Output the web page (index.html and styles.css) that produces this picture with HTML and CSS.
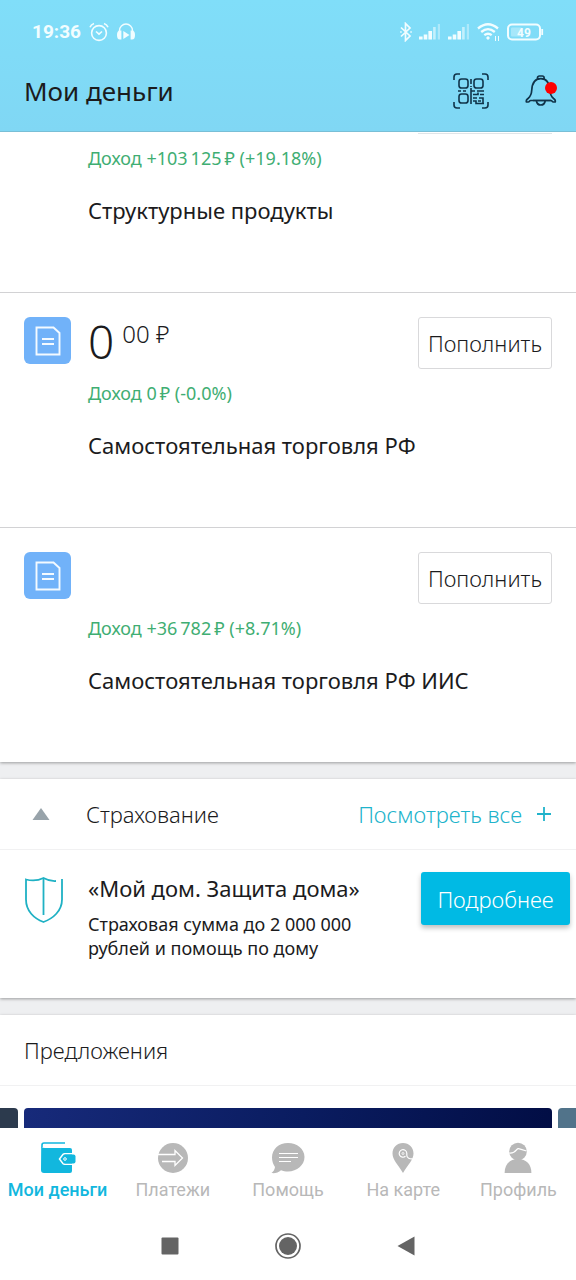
FILE: index.html
```html
<!DOCTYPE html>
<html lang="ru">
<head>
<meta charset="utf-8">
<meta name="viewport" content="width=device-width, initial-scale=1">
<title>Мои деньги</title>
<link rel="stylesheet" href="styles.css">
</head>
<body>
<div class="app">
  <header class="header">
    <div class="status">
      <div class="status-group">
        <span class="clock">19:36</span>
        <svg width="20" height="20" viewBox="0 0 20 20" fill="none" stroke="currentColor" stroke-width="1.6"><circle cx="10" cy="11" r="7.4"/><path d="M7 9.5l3 2.6 3-2.6M1 5.2Q2 2.4 5 1.4M19 5.2Q18 2.4 15 1.4"/></svg>
        <svg width="18" height="18" viewBox="0 0 18 18"><path d="M2.5 9V7.500a6.500 6.500 0 0 1 13 0V9" fill="none" stroke="currentColor" stroke-width="1.400"/><path d="M4.400 7.500v9H3Q0 16.500 0 12t3-4.500zM13.600 7.500v9H15q3 0 3-4.500t-3-4.500z" fill="currentColor"/><path d="M6.300 8l6.200 4-6.200 4z" fill="currentColor"/></svg>
      </div>
      <div class="status-group status-right">
        <svg width="12" height="20" viewBox="0 0 12 20" fill="none" stroke="currentColor" stroke-width="1.700"><path d="M1 5.500l9 8.500-4.500 4.500v-17L10 6l-9 8.500"/><path d="M.2 10h1.500M10.300 10h1.500"/></svg>
        <svg width="22" height="18" viewBox="0 0 22 18" fill="currentColor"><rect x="0" y="13.500" width="3.600" height="3"/><rect x="4.700" y="11.500" width="3.600" height="5"/><rect x="9.400" y="8" width="3.600" height="8.500"/><rect x="14.100" y="4" width="2.600" height="12.500" opacity=".6"/><rect x="18.800" y="1" width="2.200" height="15.500" opacity=".4"/></svg>
        <svg width="22" height="18" viewBox="0 0 22 18" fill="currentColor"><rect x="0" y="13.500" width="3.600" height="3"/><rect x="4.700" y="11.500" width="3.600" height="5"/><rect x="9.400" y="8" width="3.600" height="8.500"/><rect x="14.100" y="4" width="2.600" height="12.500" opacity=".6"/><rect x="18.800" y="1" width="2.200" height="15.500" opacity=".4"/></svg>
        <svg width="23" height="20" viewBox="0 0 23 20" fill="none" stroke="currentColor" stroke-width="2.300"><path d="M1 6.500Q11 -2 21 6.500M4.200 10Q11 4.300 17.800 10M7.300 13.200Q11 10.300 14.700 13.200"/><circle cx="11" cy="16" r="1.200" fill="currentColor" stroke-width="1"/><path d="M18.500 14v5M21.500 14v5" stroke-width="1"/></svg>
        <svg width="38" height="18" viewBox="0 0 38 18"><rect x="1" y="1.500" width="32" height="15" rx="4" fill="none" stroke="currentColor" stroke-width="2"/><rect x="4" y="4.500" width="11" height="9" rx="1" fill="currentColor" opacity=".35"/><path d="M35.200 6v6" stroke="currentColor" stroke-width="1.800"/><text class="battery-level" x="17" y="13.500" text-anchor="middle">49</text></svg>
      </div>
    </div>
    <div class="appbar">
      <h1 class="page-title">Мои деньги</h1>
      <div class="actions">
        <button class="icon-button" aria-label="Сканировать QR-код">
          <svg width="36" height="36" viewBox="0 0 36 36" fill="none" stroke="currentColor" stroke-width="1.600"><path d="M1 7V4a3 3 0 0 1 3-3h3M29 1h3a3 3 0 0 1 3 3v3M35 29v3a3 3 0 0 1-3 3h-3M7 35H4a3 3 0 0 1-3-3v-3"/><rect x="6" y="6" width="9" height="9" rx="2.600"/><rect x="21" y="6" width="9" height="9" rx="2.600"/><rect x="6" y="21" width="9" height="9" rx="2.600"/><path d="M18 6v5M18 13v1M5 18h3M10 18h3M18 15v16M18 18h4M24 18h7M20 21.500h5v-2M27 21.500h4M20 25h4M26 25h4v5M20 28h3v2.500h8M25 28h3"/></svg>
        </button>
        <button class="icon-button bell" aria-label="Уведомления">
          <svg width="32" height="34" viewBox="0 0 32 34" fill="none" stroke="currentColor" stroke-width="1.700"><path d="M12.500 4.500V3.800a1.800 1.800 0 0 1 1.800-1.800h3a1.800 1.800 0 0 1 1.800 1.800v.7M8.500 26.500H5.500c-1 0-1 1.500-2.200 1.500H1.500c-.8-1.500.3-2.600 1.500-3.500 2.500-2 3.500-4.500 3.700-8C7 10 9.500 4.600 15.800 4.600S24.600 10 24.900 16.500c.2 3.500 1.200 6 3.700 8 1.200.9 2.300 2 1.500 3.500h-1.800c-1.200 0-1.200-1.500-2.200-1.500z"/><path d="M11.300 26.500c1 6 8 6 9 0M8 26.500h18"/></svg>
          <span class="badge"></span>
        </button>
      </div>
    </div>
  </header>

  <main class="content">
    <section class="card">
      <article class="product product-first">
        <div class="button-edge"></div>
        <p class="income">Доход +103&#8201;125&#8201;₽ (+19.18%)</p>
        <h2 class="product-name">Структурные продукты</h2>
      </article>
      <article class="product">
        <span class="doc-icon"><svg width="26" height="30" viewBox="0 0 26 30" fill="none" stroke="currentColor" stroke-width="1.900"><path d="M1.500 1.500h17l6 5.500v21.500h-23zM7 13h12M7 18h12"/></svg></span>
        <div class="product-top">
          <p class="amount">0<sup class="cents">00 ₽</sup></p>
          <button class="button">Пополнить</button>
        </div>
        <p class="income">Доход 0&#8201;₽ (-0.0%)</p>
        <h2 class="product-name">Самостоятельная торговля РФ</h2>
      </article>
      <article class="product">
        <span class="doc-icon"><svg width="26" height="30" viewBox="0 0 26 30" fill="none" stroke="currentColor" stroke-width="1.900"><path d="M1.500 1.500h17l6 5.500v21.500h-23zM7 13h12M7 18h12"/></svg></span>
        <div class="product-top">
          <button class="button">Пополнить</button>
        </div>
        <p class="income">Доход +36&#8201;782&#8201;₽ (+8.71%)</p>
        <h2 class="product-name">Самостоятельная торговля РФ ИИС</h2>
      </article>
    </section>

    <section class="card">
      <div class="section-head">
        <button class="collapse" aria-label="Свернуть"><svg width="18" height="12" viewBox="0 0 18 12"><path d="M9 0l8.500 12H.5z" fill="currentColor"/></svg></button>
        <h2 class="section-title">Страхование</h2>
        <a class="see-all" href="#">Посмотреть все <svg width="16" height="16" viewBox="0 0 16 16" stroke="currentColor" stroke-width="1.800"><path d="M8 1v14M1 8h14"/></svg></a>
      </div>
      <article class="offer">
        <svg class="shield" width="40" height="48" viewBox="0 0 40 48" fill="none" stroke="currentColor" stroke-width="1.800"><path d="M32 5c-5 .3-8.500-.7-12.500-3C14.500 4.500 8 5 2 3.500v20C2 35 10 42.500 19.500 46 29 42.500 38 35 38 23.500V3"/><path d="M19.500 2v37"/></svg>
        <div class="offer-text">
          <h3 class="offer-name">«Мой дом. Защита дома»</h3>
          <p class="offer-note">Страховая сумма до 2 000 000 рублей и помощь по дому</p>
        </div>
        <button class="button button-primary">Подробнее</button>
      </article>
    </section>

    <section class="card">
      <div class="section-head">
        <h2 class="section-title">Предложения</h2>
      </div>
      <div class="carousel">
        <div class="slide slide-prev"></div>
        <div class="slide slide-current"></div>
        <div class="slide slide-next"></div>
      </div>
    </section>
  </main>

  <nav class="tabs">
    <a class="tab tab-active" href="#">
      <svg width="36" height="32" viewBox="0 0 36 32"><path d="M2 5.500V3a2 2 0 0 1 2-2h21" fill="none" stroke="currentColor" stroke-width="1.600"/><path d="M1.200 4.500Q2 6 5 6h25a2 2 0 0 1 2 2v21a2 2 0 0 1-2 2H4a3 3 0 0 1-3-3z" fill="currentColor"/><path d="M33 11.700h-8.500a2 2 0 0 0-1.400.6L19.500 17l3.600 4.700a2 2 0 0 0 1.400.6H33" fill="none" stroke="#fff" stroke-width="1.500"/><path d="M25 12.500h8.500a2 2 0 0 1 2 2v5a2 2 0 0 1-2 2H25L20.700 17z" fill="currentColor"/><circle cx="25" cy="17" r="1.300" fill="none" stroke="#fff"/></svg>
      <span>Мои деньги</span>
    </a>
    <a class="tab" href="#">
      <svg width="32" height="32" viewBox="0 0 32 32"><circle cx="16" cy="16" r="15" fill="currentColor"/><path d="M1 12.500h17V8.500l7.500 7.500-7.500 7.500v-4H5" fill="none" stroke="#fff" stroke-width="1.300"/></svg>
      <span>Платежи</span>
    </a>
    <a class="tab" href="#">
      <svg width="34" height="32" viewBox="0 0 34 32"><path d="M17 1c9 0 16.500 6 16.500 14S26 29.500 17 29.500c-2.500 0-5-.4-7-1.300C7.500 30.500 4 31.500.5 31c2-1.500 3.200-3.500 3.500-6C2 22 1 19 1 15.500 1 7 8 1 17 1z" fill="currentColor"/><path d="M8 11.500h19M8 15.500h19M8 19.500h12" stroke="#fff" stroke-width="1.200"/></svg>
      <span>Помощь</span>
    </a>
    <a class="tab" href="#">
      <svg width="24" height="32" viewBox="0 0 24 32"><path d="M12 1c6 0 10.500 4.500 10.500 10.500C22.500 18 17 22.500 12 31 7 22.500 1.500 18 1.500 11.500 1.500 5.500 6 1 12 1z" fill="currentColor"/><path d="M14.500 14.300a3.800 3.800 0 1 1 1.300-3v1.900c0 2.800 3 4 6 3.600" fill="none" stroke="#fff" stroke-width="1.200"/><circle cx="12" cy="11.500" r="1" fill="none" stroke="#fff" stroke-width=".8"/></svg>
      <span>На карте</span>
    </a>
    <a class="tab" href="#">
      <svg width="28" height="32" viewBox="0 0 28 32" fill="currentColor"><circle cx="14" cy="9.500" r="8.800"/><path d="M.6 31c0-8.500 5-14 13.400-14s13.400 5.500 13.400 14z"/><path d="M5.500 11c4 .3 5.500-1.200 7-3.200 1-1.300 1.800-1.500 3-1l7 2.200" fill="none" stroke="#fff" stroke-width="1.300"/></svg>
      <span>Профиль</span>
    </a>
  </nav>

  <div class="system-nav">
    <button class="system-button" aria-label="Недавние"><svg width="18" height="18" viewBox="0 0 18 18"><rect x=".5" y=".5" width="17" height="17" rx="1" fill="currentColor"/></svg></button>
    <button class="system-button" aria-label="Домой"><svg width="26" height="26" viewBox="0 0 26 26"><circle cx="13" cy="13" r="12" fill="none" stroke="currentColor" stroke-width="1.700"/><circle cx="13" cy="13" r="9" fill="currentColor"/></svg></button>
    <button class="system-button" aria-label="Назад"><svg width="18" height="20" viewBox="0 0 18 20"><path d="M17.500.5v19L.5 10z" fill="currentColor"/></svg></button>
  </div>
</div>
</body>
</html>
```

FILE: styles.css
```css
* {
  box-sizing: border-box;
}

body,
h1,
h2,
h3,
p {
  margin: 0;
}

body {
  background: #eeeff1;
  color: #1b1b1d;
  font-family: "Noto Sans", "Open Sans", sans-serif;
}

h1,
h2,
h3 {
  font-weight: 400;
}

svg {
  display: block;
  flex: none;
}

button {
  margin: 0;
  padding: 0;
  border: 0;
  background: none;
  color: inherit;
  font: inherit;
}

a {
  color: inherit;
  text-decoration: none;
}

.app {
  display: flex;
  flex-direction: column;
  height: 100vh;
}

.header {
  flex: none;
  background: linear-gradient(#80def9, #80d7f4);
  border-bottom: 1px solid #79bfd6;
}

.status {
  display: flex;
  justify-content: space-between;
  align-items: center;
  height: 64px;
  padding: 0 31px 0 32px;
  color: #f2fdff;
}

.status-group {
  display: flex;
  align-items: center;
  gap: 8px;
}

.status-right {
  gap: 7px;
}

.clock {
  font: 700 19px/24px Roboto, sans-serif;
}

.battery-level {
  fill: currentColor;
  font: 700 12px Roboto, sans-serif;
}

.appbar {
  display: flex;
  justify-content: space-between;
  align-items: center;
  height: 67px;
  padding: 0 19px 13px 24px;
}

.page-title {
  font-size: 26px;
  line-height: 32px;
}

.actions {
  display: flex;
  align-items: center;
  gap: 36px;
  color: #10344a;
}

.bell {
  position: relative;
}

.badge {
  position: absolute;
  top: 8px;
  right: 0;
  width: 12px;
  height: 12px;
  border-radius: 50%;
  background: #fe0000;
}

.content {
  flex: 1;
  min-height: 0;
  overflow: hidden;
}

.card {
  margin-bottom: 17px;
  background: #fff;
  box-shadow: 0 1px 3px rgba(0, 0, 0, 0.35);
}

.product {
  display: grid;
  grid-template-columns: 64px 1fr;
  padding: 24px 24px 68px;
  border-bottom: 1px solid #d2d2d4;
}

.product:last-child {
  border-bottom: 0;
}

.product-first {
  padding-top: 0;
}

.button-edge {
  grid-column: 2;
  justify-self: end;
  width: 134px;
  height: 2px;
  margin-bottom: 12px;
  border-bottom: 1px solid #e0e5e8;
}

.doc-icon {
  display: grid;
  place-items: center;
  width: 47px;
  height: 47px;
  border-radius: 6px;
  background: #71b2f9;
  color: #f4faff;
}

.product-top {
  display: flex;
  justify-content: flex-end;
  height: 52px;
  margin-bottom: 12px;
}

.amount {
  flex: 1;
  font-size: 46px;
  font-weight: 300;
  line-height: 48px;
}

.cents {
  margin-left: 8px;
  font-size: 24px;
  line-height: 24px;
}

.button {
  width: 134px;
  height: 52px;
  border: 1px solid #d9d9db;
  border-radius: 3px;
  background: #fff;
  font-size: 22px;
  font-weight: 300;
  line-height: 28px;
}

.income {
  grid-column: 2;
  margin-bottom: 26px;
  color: #3fae73;
  font-size: 18px;
  line-height: 24px;
}

.product-name {
  grid-column: 2;
  font-size: 22px;
  line-height: 28px;
}

.section-head {
  display: flex;
  align-items: center;
  height: 71px;
  padding: 0 24px;
  border-bottom: 1px solid #f1f1f2;
}

.collapse {
  width: 62px;
  padding-left: 8px;
  color: #98a3aa;
}

.section-title {
  flex: 1;
  font-size: 22px;
  font-weight: 300;
  line-height: 28px;
}

.see-all {
  display: flex;
  align-items: center;
  gap: 14px;
  color: #20b3cb;
  font-size: 22px;
  font-weight: 300;
  line-height: 28px;
}

.offer {
  display: flex;
  align-items: flex-start;
  padding: 22px 6px 38px 24px;
}

.shield {
  margin-top: 4px;
  color: #1fb1c4;
}

.offer-text {
  flex: 1;
  padding: 2px 48px 0 24px;
}

.offer-name {
  margin-bottom: 10px;
  font-size: 22px;
  line-height: 28px;
  white-space: nowrap;
}

.offer-note {
  font-size: 18px;
  line-height: 24px;
}

.button-primary {
  width: 149px;
  height: 53px;
  border: 0;
  background: #00bae4;
  box-shadow: 0 3px 5px rgba(0, 0, 0, 0.25);
  color: #fff;
}

.carousel {
  display: flex;
  gap: 6px;
  padding-top: 22px;
}

.slide {
  height: 180px;
  border-radius: 4px;
}

.slide-prev {
  width: 18px;
  border-top-left-radius: 0;
  background: #2c3a4d;
}

.slide-current {
  flex: 1;
  background: linear-gradient(100deg, #172a7a, #0a1c60 50%, #010c42);
}

.slide-next {
  width: 18px;
  border-top-right-radius: 0;
  background: #51738a;
}

.tabs {
  display: grid;
  grid-template-columns: repeat(5, 1fr);
  flex: none;
  padding: 14px 0 9px;
  background: #fff;
}

.tab {
  display: flex;
  flex-direction: column;
  align-items: center;
  gap: 4px;
  color: #b8b8b8;
  font: 400 18px/24px Roboto, sans-serif;
  white-space: nowrap;
}

.tab-active {
  color: #12b7de;
  font-weight: 500;
}

.system-nav {
  display: flex;
  justify-content: center;
  align-items: center;
  gap: 96px;
  flex: none;
  height: 69px;
  background: #fff;
  color: #646464;
}
```
